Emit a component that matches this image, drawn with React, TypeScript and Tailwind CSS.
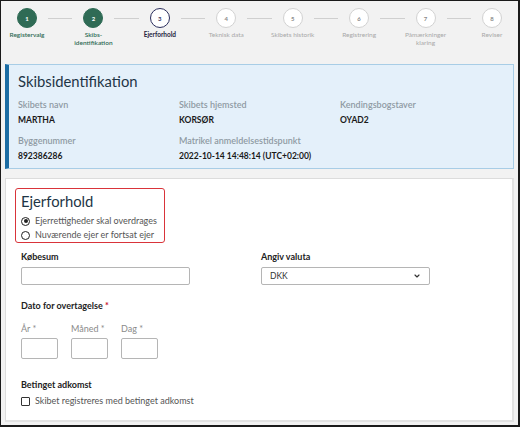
import React from 'react';
import { ChevronDown } from 'lucide-react';

type Step = { n: number; label: string[]; state: 'done' | 'active' | 'todo' };

const steps: Step[] = [
  { n: 1, label: ['Registervalg'], state: 'done' },
  { n: 2, label: ['Skibs-', 'identifikation'], state: 'done' },
  { n: 3, label: ['Ejerforhold'], state: 'active' },
  { n: 4, label: ['Teknisk data'], state: 'todo' },
  { n: 5, label: ['Skibets historik'], state: 'todo' },
  { n: 6, label: ['Registrering'], state: 'todo' },
  { n: 7, label: ['Påmærkninger', 'klaring'], state: 'todo' },
  { n: 8, label: ['Reviser'], state: 'todo' },
];

const StepItem: React.FC<{ step: Step }> = ({ step }) => {
  const circle =
    step.state === 'done'
      ? 'bg-[#2f6b55] text-white border-[#2f6b55]'
      : step.state === 'active'
      ? 'bg-white text-[#2a2d5c] border-[#2a2d5c] border-[1.5px]'
      : 'bg-white text-[#8a8a8a] border-[#d2d2d2]';
  const label =
    step.state === 'done'
      ? 'text-[#2f6b55] font-semibold'
      : step.state === 'active'
      ? 'text-[#1f2440] font-bold'
      : 'text-[#a8a8a8]';
  return (
    <div className="flex flex-col items-center w-5 shrink-0">
      <div className={`w-5 h-5 rounded-full border flex items-center justify-center text-[6px] font-bold ${circle}`}>
        {step.n}
      </div>
      <div className={`mt-[3px] text-[6.5px] leading-[8px] whitespace-nowrap text-center ${label}`}>
        {step.label.map((l, i) => (
          <div key={i}>{l}</div>
        ))}
      </div>
    </div>
  );
};

const InfoField: React.FC<{ label: string; value: string }> = ({ label, value }) => (
  <div>
    <div className="text-[9px] leading-[12px] font-semibold text-[#8f9aa3]">{label}</div>
    <div className="mt-[3px] text-[8.5px] leading-[12px] font-bold text-[#1a1a1a]">{value}</div>
  </div>
);

const Radio: React.FC<{ checked?: boolean; label: string }> = ({ checked, label }) => (
  <div className="flex items-center gap-[5px] h-[12px]">
    <span className="w-[9px] h-[9px] rounded-full border-[1.5px] border-[#222] flex items-center justify-center">
      {checked && <span className="w-[4px] h-[4px] rounded-full bg-[#222]" />}
    </span>
    <span className="text-[9px] text-[#555]">{label}</span>
  </div>
);

export default function App() {
  return (
    <div
      className="w-[520px] h-[427px] bg-[#f2f2f2] border border-r-2 border-b-2 border-[#1a1a1a] overflow-hidden"
      style={{ fontFamily: 'Lato, "Noto Sans", sans-serif' }}
    >
      {/* Stepper */}
      <div className="h-[63px] pt-[7px] px-[16px]">
        <div className="flex items-start">
          {steps.map((s, i) => (
            <React.Fragment key={s.n}>
              {i > 0 && <div className="flex-1 mx-[11px] mt-[10px] h-px bg-[#cfcfcf]" />}
              <StepItem step={s} />
            </React.Fragment>
          ))}
        </div>
      </div>

      {/* Skibsidentifikation */}
      <div className="mx-[4px] h-[105px] border border-[#a8cde6] border-l-4 border-l-[#1b6ca3] bg-[#e4f0fa] pl-[9px] pt-[6px]">
        <h2 className="text-[14.8px] leading-[20px] text-[#1e3546]">Skibsidentifikation</h2>
        <div className="mt-[8px] grid grid-cols-[161px_161px_1fr] gap-y-[9px]">
          <InfoField label="Skibets navn" value="MARTHA" />
          <InfoField label="Skibets hjemsted" value="KORSØR" />
          <InfoField label="Kendingsbogstaver" value="OYAD2" />
          <InfoField label="Byggenummer" value="892386286" />
          <InfoField label="Matrikel anmeldelsestidspunkt" value="2022-10-14 14:48:14 (UTC+02:00)" />
        </div>
      </div>

      {/* Ejerforhold */}
      <div className="mx-[4px] mt-[9px] h-[244px] bg-white border border-[#dcdcdc] border-r-2 border-b-2 border-r-[#e2e2e2] border-b-[#e2e2e2]">
        <div className="ml-[9px] mt-[9px] w-[150px] h-[55px] border border-[#d9343a] rounded-[3px] pl-[5px] pt-[2px]">
          <h3 className="text-[14.8px] leading-[20px] text-[#1e3546]">Ejerforhold</h3>
          <div className="mt-[4px] flex flex-col gap-[2px]">
            <Radio checked label="Ejerrettigheder skal overdrages" />
            <Radio label="Nuværende ejer er fortsat ejer" />
          </div>
        </div>

        <div className="pl-[15px] mt-[8px]">
          <div className="grid grid-cols-[240px_1fr]">
            <div>
              <div className="text-[9px] leading-[12px] font-bold text-[#222]">Købesum</div>
              <div className="mt-[4px] w-[169px] h-[18px] border border-[#b5b5b5] rounded-[2px] bg-white" />
            </div>
            <div>
              <div className="text-[9px] leading-[12px] font-bold text-[#222]">Angiv valuta</div>
              <div className="mt-[4px] w-[169px] h-[18px] border border-[#b5b5b5] rounded-[2px] bg-white flex items-center justify-between pl-[8px] pr-[8px]">
                <span className="text-[8.5px] text-[#333]">DKK</span>
                <ChevronDown size={8} strokeWidth={3.5} className="text-[#333]" />
              </div>
            </div>
          </div>

          <div className="mt-[15px] text-[9px] leading-[12px] font-bold text-[#222]">
            Dato for overtagelse <span className="text-[#c8102e]">*</span>
          </div>
          <div className="mt-[11px] flex gap-[13px]">
            {['År', 'Måned', 'Dag'].map((l) => (
              <div key={l}>
                <div className="text-[9px] leading-[12px] text-[#8a8a8a]">
                  {l} <span>*</span>
                </div>
                <div className="mt-[3px] w-[37px] h-[21px] border border-[#b5b5b5] rounded-[2px]" />
              </div>
            ))}
          </div>

          <div className="mt-[20px] text-[9px] leading-[12px] font-bold text-[#222]">Betinget adkomst</div>
          <div className="mt-[4px] flex items-center gap-[5px] h-[12px]">
            <span className="w-[9px] h-[9px] border-[1.5px] border-[#333] rounded-[1px]" />
            <span className="text-[9px] text-[#555]">Skibet registreres med betinget adkomst</span>
          </div>
        </div>
      </div>
    </div>
  );
}
